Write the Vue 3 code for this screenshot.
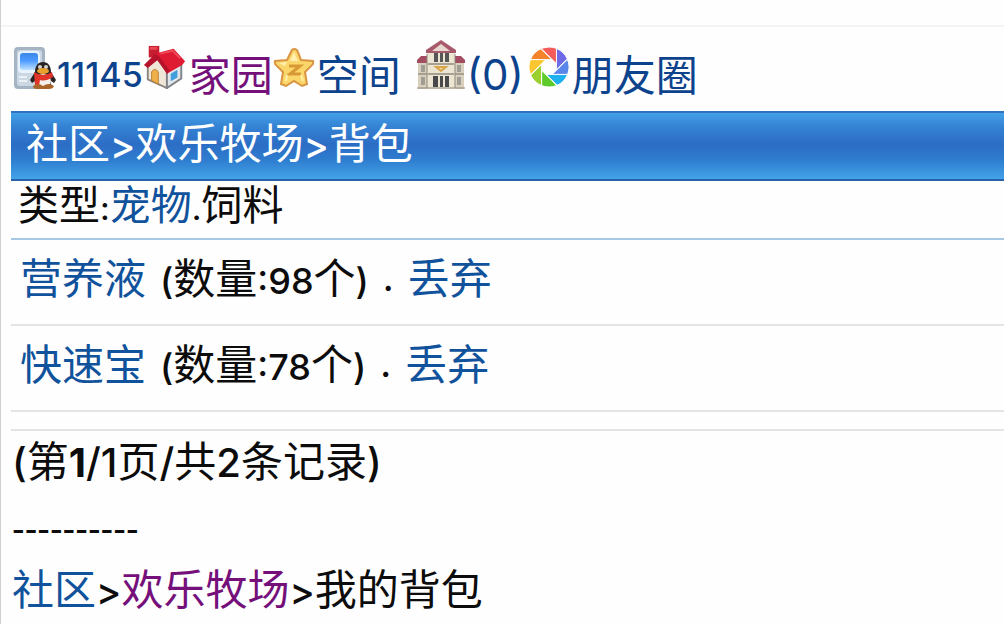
<template>
  <div class="page">
    <nav class="top-nav">
      <a href="#" class="nav-link">
        <svg class="icon icon-md" viewBox="0 0 44 44" aria-hidden="true">
          <defs>
            <linearGradient id="screen" x1="0" y1="0" x2="0" y2="1">
              <stop offset="0" stop-color="#3b86e6" />
              <stop offset=".45" stop-color="#4d9bff" />
              <stop offset="1" stop-color="#bfe1ff" />
            </linearGradient>
          </defs>
          <rect x="1" y="2" width="31" height="42" rx="4" fill="#a4b4c2" />
          <rect x="4" y="5" width="25" height="36" rx="3" fill="#cbd8e3" />
          <rect x="5" y="6" width="22" height="22" rx="4" fill="#e6f2fd" />
          <rect x="7" y="8" width="18" height="17" rx="3" fill="url(#screen)" />
          <path d="M6 32h8M6 36h8" stroke="#e9f0f6" stroke-width="2" />
          <path d="M22 27c0-6 3-10 8-10s8 4 8 10l5 8-2 3-3-2v7H22v-7l-3 2-2-3z" fill="#2b2424" />
          <ellipse cx="30" cy="36" rx="8" ry="7" fill="#f4f1ed" />
          <path d="M21 27q9 6 18 0l1 5q-8 5-13 3l-1 6-4-1z" fill="#e23428" />
          <circle cx="27" cy="22" r="2" fill="#d8d4d0" />
          <circle cx="33" cy="22" r="2" fill="#d8d4d0" />
          <ellipse cx="30" cy="26" rx="6" ry="3" fill="#e9a12c" />
          <path d="M20 41q5-4 10 0 6-4 11 0-1 3-5 3H24q-4 0-4-3z" fill="#a9652a" />
        </svg>
        <span class="uid">11145</span>
      </a>
      <a href="#" class="nav-link visited">
        <svg class="icon icon-md house" viewBox="0 0 44 46" aria-hidden="true">
          <path d="M4 20 14 14l10 13v18L4 36z" fill="#efe6d8" stroke="#8b8580" stroke-width="2" />
          <path d="M24 27 36 17l3 4v14L24 45z" fill="#e2e6ea" stroke="#7f8287" stroke-width="2" />
          <path d="M8 28q3-5 7 0v13l-7-4z" fill="#efb04b" stroke="#b98136" />
          <path d="m28 30 7-4v8l-7 4z" fill="#3f9edb" />
          <path d="M5 1h11v12H5z" fill="#c61d30" />
          <path d="M6 2h8v3H6z" fill="#e84855" />
          <path d="M12 9 31 4l12 13-3 4-16 9-9-15z" fill="#df1b33" />
          <path d="M12 9 0 21l4 3 10-8 10 14 3-3-11-15z" fill="#b5122c" />
          <path d="m17 9 13-3 8 8" fill="none" stroke="#ef4a58" stroke-width="2" />
        </svg>
        <span>家园</span>
      </a>
      <a href="#" class="nav-link">
        <svg class="icon icon-sm" viewBox="0 0 42 42" aria-hidden="true">
          <path d="M21 3q3 0 4 3l3 8 12 1q1 3-2 5l-6 6 2 12-5 2-8-5-8 5-5-2 2-12-6-6q-3-2-2-5l12-1 4-8q1-3 3-3z" fill="#fbd66a" stroke="#d99543" stroke-width="2" />
          <path d="m21 6 4 9h-8zM6 17l8-1-2 4z" fill="#fff0b0" />
          <path d="M16 20h11L17 28h11" fill="none" stroke="#d99a35" stroke-width="3" />
          <path d="m13 35 1-6M30 35l-2-6" stroke="#fff1a8" stroke-width="2" />
        </svg>
        <span>空间</span>
      </a>
      <a href="#" class="nav-link hall">
        <svg class="icon icon-lg" viewBox="0 0 48 50" aria-hidden="true">
          <path d="M1 19h46v30H1z" fill="#d8d0bd" />
          <path d="M10 11h28v38H10z" fill="#ece5d2" />
          <path d="M24 0 9 10v3h30v-3z" fill="#a75a6c" />
          <path d="m24 4-9 7h18z" fill="#e8d9d0" />
          <path d="M4 16h6v7H0v-3zM38 16h6l4 4v3H38z" fill="#a34c62" />
          <path d="M17 13h4v9h-4zM23 13h3v9h-3zM28 13h4v9h-4z" fill="#565558" />
          <path d="M11 24h26M11 34h26M1 34h9M38 34h9" stroke="#a79f92" stroke-width="2" />
          <path d="m19 27 5 4 5-4z" fill="#f3dd9c" stroke="#d6a54c" stroke-width="2" />
          <path d="M16 36h5v11h-5zM23 36h3v11h-3zM28 36h4v11h-4z" fill="#49494c" />
          <path d="M4 25h4v7H4zM40 25h4v7h-4zM4 37h4v8H4zM40 37h4v8h-4z" fill="#a09d95" />
          <path d="M0 48h48M10 14v34M38 14v34" stroke="#8e887d" stroke-width="1" />
        </svg>
        <span class="latin count">(0)</span>
      </a>
      <a href="#" class="nav-link">
        <svg class="icon icon-sm" viewBox="0 0 42 42" aria-hidden="true">
          <g stroke="#fff" stroke-width="1">
            <path
              v-for="(color, i) in blades"
              :key="color"
              d="M28.4 24.1V2.4A20 20 0 0 1 39.4 13.1z"
              :fill="color"
              :transform="`rotate(${i * 45} 21 21)`"
            />
          </g>
        </svg>
        <span>朋友圈</span>
      </a>
    </nav>

    <main class="content">
      <h1 class="title">社区<span class="gt">&gt;</span>欢乐牧场<span class="gt">&gt;</span>背包</h1>
      <div class="types">类型<span class="latin">:</span><a href="#">宠物</a><span class="latin">.</span>饲料</div>

      <ul class="items">
        <li v-for="item in items" :key="item.name" class="item">
          <a href="#">{{ item.name }}</a>
          <span><span class="latin">(</span>数量<span class="latin">:{{ item.count }}</span>个<span class="latin">)</span></span>
          <span class="latin">.</span>
          <a href="#">丢弃</a>
        </li>
      </ul>

      <p class="pager">
        <span class="latin">(</span>第<span class="latin"><b>1</b>/1</span>页<span class="latin">/</span>共<span class="latin">2</span>条记录<span class="latin">)</span>
      </p>
      <p class="dashes">----------</p>
      <p class="crumbs">
        <a href="#">社区</a><span class="gt">&gt;</span><a href="#" class="visited">欢乐牧场</a><span class="gt">&gt;</span>我的背包
      </p>
    </main>
  </div>
</template>

<script setup>
import { ref } from 'vue';

const items = ref([
  { name: '营养液', count: 98 },
  { name: '快速宝', count: 78 },
]);

// Shutter blades, clockwise from the upper right
const blades = ['#6f6ae6', '#5a86ec', '#1fb0f0', '#5dcc2b', '#9bd02f', '#fbc62f', '#f5832b', '#f45b5b'];
</script>

<style>
body {
  margin: 0;
  background: #fefefe;
}
</style>

<style scoped>
.page {
  min-height: 100vh;
  box-sizing: border-box;
  padding-top: 25px;
  border-left: 1px solid #d0d0d0;
  font-family: Lato, "Noto Sans CJK SC", sans-serif;
  font-size: 42px;
  line-height: 60px;
  color: #0c0c0c;
  white-space: nowrap;
  overflow: hidden;
}

a {
  color: #10529b;
  text-decoration: none;
}

.visited {
  color: #75107b;
}

.latin,
.uid,
.gt {
  font-family: Inter, sans-serif;
  font-size: 36px;
  font-weight: 500;
}

.gt {
  font-size: 38px;
}

.top-nav {
  display: flex;
  align-items: center;
  height: 84px;
  padding-left: 12px;
  border-top: 2px solid #f4f4f4;
}

.nav-link {
  display: flex;
  align-items: center;
  padding-top: 12px;
  color: #0d438d;
}

.nav-link.visited {
  color: #75107b;
}

.icon {
  flex: none;
  margin-bottom: 16px;
}

.icon-sm {
  width: 42px;
  height: 42px;
  margin-right: 2px;
}

.icon-md {
  width: 44px;
  height: 44px;
}

.house {
  margin-right: 2px;
}

.icon-lg {
  width: 48px;
  height: 50px;
  margin-bottom: 20px;
}

.hall {
  margin-left: 16px;
}

.uid {
  font-size: 34px;
}

.count {
  padding: 0 4px 0 2px;
  font-size: 42px;
  font-weight: 400;
}

.content {
  padding-left: 10px;
}

.title {
  box-sizing: border-box;
  height: 70px;
  margin: 0;
  padding: 0 15px;
  border-top: 2px solid #2f72bd;
  border-bottom: 2px solid #2761ae;
  background: linear-gradient(#43a0e8 0%, #3583d4 20%, #2b6dc5 48%, #2f7ed0 72%, #43a3e8 100%);
  color: #fff;
  font-size: 42px;
  font-weight: 400;
}

.types {
  height: 57px;
  font-size: 41px;
  line-height: 48px;
  padding-left: 7px;
  border-bottom: 2px solid #a9c8e6;
}

.types .latin {
  font-size: 32px;
}

.items {
  margin: 0 0 17px;
  padding: 0;
  list-style: none;
}

.item {
  display: flex;
  gap: 14px;
  height: 84px;
  line-height: 76px;
  padding-left: 9px;
  border-bottom: 2px solid #e3e5e5;
}

.pager,
.dashes,
.crumbs {
  margin: 0;
}

.pager {
  padding-left: 1px;
  border-top: 2px solid #e3e5e5;
}

.pager .latin {
  font-size: 40px;
}

.dashes {
  padding: 6px 1px 0;
  font-family: "Liberation Sans", sans-serif;
  font-size: 38px;
}

.crumbs {
  padding-left: 1px;
}
</style>
